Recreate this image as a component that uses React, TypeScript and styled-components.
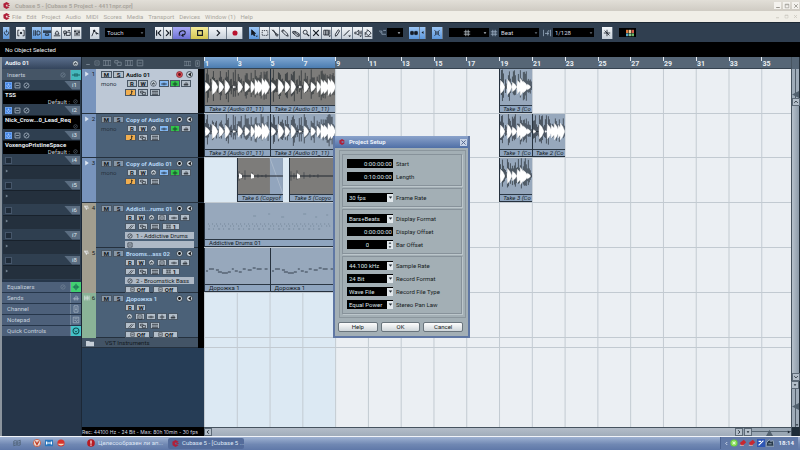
import React from "react";
import styled, { createGlobalStyle, css } from "styled-components";

const Global = createGlobalStyle`
  *, *::before, *::after { box-sizing: border-box; }
  html, body, #root { height: 100%; }
  body { margin: 0; background: #2a3b4e; }
  body, button, input, select {
    font-family: Roboto, "Liberation Sans", Arial, sans-serif;
    font-size: 6px;
    line-height: 8px;
  }
  button, input, select { margin: 0; padding: 0; border: 0; border-radius: 0; color: inherit; }
  svg { display: block; }
`;

/* ---------- glyphs ---------- */

const glyphs: Record<string, React.ReactNode> = {
  power: <><path d="M3.2 3.3a3 3 0 1 0 3.6 0" /><path d="M5 1v4" /></>,
  bracket: <><path d="M3 1.5H1v7h2M7 1.5h2v7H7" /><path d="M5 3.6v2.8M3.6 5h2.8M4 4l2 2M6 4 4 6" /></>,
  inspector: <><path d="M1 1.5v7M3 1.5v7" /><path d="M5 2.5h1.5a2.5 2.5 0 0 1 0 5H5z" /></>,
  info: <><path d="M0 2.5h10M0 4h10" strokeWidth="1.3" /><path d="M3 6h4v2H3z" /></>,
  overview: <path d="M1 8.5h8M2.5 6.5h5L6 3a1.5 1.5 0 0 0-2 0z" />,
  pool: <path d="M1 2.5h3v3H1zM4 4h5v4H4zM2 5.5v3M6 2h3" />,
  mixer: <><path d="M2.5 1v8M5 1v8M7.5 1v8" /><path d="M1.5 3h2M4 6h2M6.5 4h2" strokeWidth="1.6" /></>,
  curve: <><path d="M1 9 4 2l3 3.5L9.5 6" /><circle cx="4" cy="2.3" r="1" fill="currentColor" /><circle cx="7" cy="5.5" r=".8" /></>,
  prev: <path d="M2 1.5v7M7.5 1.5 4 5l3.5 3.5" strokeWidth="1.4" />,
  next: <path d="M8 1.5v7M2.5 1.5 6 5 2.5 8.5" strokeWidth="1.4" />,
  cycle: <path d="M1 7.5h2M1.5 6.5C1.5 1 9 1 9 4.5S6.5 8 5 8M6.7 6 4.8 8l2 1.5" strokeWidth="1.3" />,
  stop: <path d="M2 2h6v6H2z" strokeWidth="1.4" />,
  play: <path d="M3.5 1.5 7 5 3.5 8.5" strokeWidth="1.5" />,
  record: <circle cx="5" cy="5" r="3.2" fill="#b8122f" stroke="none" />,
  arrow: <><path d="M2 1v6.5l1.8-1.5 1.3 2.6 1-.6-1.2-2.5H7z" fill="currentColor" /><path d="M7 8.5h3L8.5 10z" fill="currentColor" stroke="none" /></>,
  range: <path d="M1.5 2h7v6h-7z" strokeDasharray="1.3 1" />,
  split: <path d="M1 1l6 5M3 1 6 7M6 6l3 1-1 2-2-1z" />,
  glue: <path d="M1 2l2-1 5 5 1 3-3-1-5-5zM3 1 2 4" />,
  erase: <path d="M1 3h3l5 3v3H6L1 5zM1 5h3l5 3M4 3v2" />,
  zoom: <><circle cx="4" cy="4" r="2.5" /><path d="M6 6l3 3" strokeWidth="1.5" /></>,
  mute: <path d="M1.5 1.5l7 7M8.5 1.5l-7 7" strokeWidth="1.5" />,
  warp: <><path d="M1 1.5h6v6H1zM3 1.5v6M5 1.5v6M8.5 1v6" /><path d="M6.5 8h3.5L8.3 10z" fill="currentColor" stroke="none" /></>,
  pencil: <path d="M3 9V6.5L6.5 1l1.8 1.3L5 8z" />,
  line: <><path d="M1 8.5 8 1.5" strokeWidth="1.2" /><path d="M6.5 8h3.5L8.3 10z" fill="currentColor" stroke="none" /></>,
  speaker: <><path d="M1 4h2l3-2.5v6L3 6H1zM7.5 3v3M9 2v5" /><path d="M6.5 8h3.5L8.3 10z" fill="currentColor" stroke="none" /></>,
  bucket: <path d="M2 5 5 1.5 9 5 5.5 8.5zM1.5 4v4M4 2V.5M1 9.7h8" />,
  step: <path d="M0 3h4v4.5h6M6 2h4M2 5h1" />,
  snap: <path d="M1 3h3v4H1zM6 3h3v4H6zM0 5h10" fill="currentColor" />,
  left: <path d="M7 2 3 5l4 3z" fill="currentColor" stroke="none" />,
  right: <path d="M2 1l6 4-6 4z" fill="currentColor" stroke="none" />,
  down: <path d="M1.5 3h7L5 7.5z" fill="currentColor" stroke="none" />,
  up: <path d="M1.5 7h7L5 2.5z" fill="currentColor" stroke="none" />,
  chevLeft: <path d="M6.5 2 3.5 5l3 3" strokeWidth="1.5" />,
  chevRight: <path d="M3.5 2l3 3-3 3" strokeWidth="1.5" />,
  chevUp: <path d="M2 6.5l3-3 3 3" strokeWidth="1.5" />,
  chevDown: <path d="M2 3.5l3 3 3-3" strokeWidth="1.5" />,
  cross: <path d="M2 1.5c2 2 2 5 0 7M8 1.5c-2 2-2 5 0 7M5 2.5v5" />,
  hash: <path d="M3.5 1v8M6.5 1v8M1 3.5h8M1 6.5h8" />,
  quant: <path d="M.5 1v8M9.5 1v8M6 8V3.5A1.3 1.3 0 0 1 8 2.5M2.5 5.5h5" />,
  star: <path d="M5 1v8M1 5h8M2 2l6 6" />,
  wave: <path d="M0 5h3M7 5h3M3.500 3v4M5 3v4M6.500 3v4" />,
  eq: <path d="M1 5h2M7 5h2M3.500 3v4M5 1v8M6.500 3v4" />,
  sends: <path d="M1 6h8M3 4v4M5 2v6M7 3v5" />,
  channel: <path d="M2.5 1h5v8h-5zM5 2.5V7M4 5.5h2" />,
  note: <path d="M1.5 1.5h7v7h-7zM3 3.5h4M3 5.5h2M7 5 5 7.5" />,
  ring: <><circle cx="5" cy="5" r="3.7" strokeWidth="1.3" /><path d="M3.5 4.5 5 6.5 6.5 4.5" /></>,
  edit: <><circle cx="5" cy="5" r="4" fill="#d5dde5" stroke="#333f4c" /><path d="M3.5 5h3.2A1.7 1.7 0 1 0 6.5 6.5" stroke="#26303a" /></>,
  dotRing: <><circle cx="5" cy="5" r="4.3" fill="#c6d0da" stroke="#202932" /><circle cx="5" cy="5" r="2" fill="#101010" stroke="none" /></>,
  armed: <><circle cx="5" cy="5" r="4.3" fill="#d94f55" stroke="#7e2430" /><circle cx="5" cy="5" r="2" fill="#65101a" stroke="none" /></>,
  monitor: <><circle cx="5" cy="5" r="4.3" fill="#c6d0da" stroke="#202932" /><path d="M7 2v6L3 5z" fill="#161616" stroke="none" /></>,
  music: <path d="M6 1v6M6 2l2 1M3 7.500h3" strokeWidth="1.3" />,
  lane: <path d="M1 2h4v3H1zM5 4h4v4H4V5" />,
  keys: <path d="M0 2h10v6H0zM3.3 2v6M6.6 2v6" />,
  slash: <path d="M1 8 6 2M4 8l5-6" />,
  square: <path d="M1.5 1.5h7v7h-7zM3 5h4" />,
  circle: <><circle cx="5" cy="5" r="3.6" /><path d="M3.5 6.5l3-3" /></>,
  folder: <path d="M0 2.5h4l1 1h5V9H0z" fill="#c6cfd8" stroke="none" />,
  midi: <path d="M0 2h7M2 2v3h6M4 5v3" stroke="#e8ebee" strokeWidth="1.5" />,
  bars: <path d="M1 1v8M3.5 1v8M6 1v8M8.5 1v8M1 5h7.5" stroke="#e8ebee" />,
  thumb: <path d="M5 1 10 10H0z" fill="#52616f" stroke="none" />,
  thumbLeft: <path d="M0 5 10 0v10z" fill="#52616f" stroke="none" />,
  min: <path d="M2 7.5h6" strokeWidth="1.5" />,
  max: <path d="M2 2h6v6H2zM2 3h6" />,
  close: <path d="M2 2l6 6M8 2 2 8" strokeWidth="1.3" />,
  cubase: <><path d="M5 0 9.5 2.5 7 4.2 5.3 3.4 3.8 5l1.6 1.7L7 6l2.3 1.5L5 10 .8 7.5.5 2.5z" fill="#b0203a" stroke="none" /><path d="M6.5 5h3" stroke="#b0203a" strokeWidth="1.5" /></>,
  firefoxRed: <><circle cx="5" cy="5" r="4.5" fill="#e8e0dc" stroke="#cf5030" /><path d="M3 3l2 4 2-4" stroke="#c23b22" strokeWidth="1.6" /></>,
  mailBlue: <><path d="M0 1h10v8H0z" fill="#2b77bd" stroke="none" /><path d="M2 3v4M8 3v4M3 5h4" stroke="#fff" strokeWidth="1.5" /></>,
  redBall: <><circle cx="5" cy="5" r="4.5" fill="#d8352d" stroke="none" /><path d="M1 6h8a4.5 4 0 0 1-8 0" fill="#f3dfc0" stroke="none" /></>,
  opera: <><circle cx="5" cy="5" r="4.8" fill="#b81b22" stroke="none" /><path d="M5 2v4M5 7v1.3" stroke="#fff" strokeWidth="1.4" /></>,
  flag: <path d="M1 2.5c2-1 3 0 4 0s2 0 4-1v6c-2 1-3 0-4 0s-2 0-4 1zM5 2.5v5M1 5.3c3-1 5 .5 8-.8" stroke="#4c6072" />,
  green: <><circle cx="5" cy="5" r="4.5" fill="#6ed43b" stroke="none" /><path d="M2 5h6M5 2v6M3 3l4 4M7 3 3 7" stroke="#e9ffd8" /></>,
  redTray: <><path d="M1 5l5-4 3 3-5 5z" fill="#c9272f" stroke="none" /><path d="M1 8h5" stroke="#e9b7b7" /></>,
  blueTray: <><path d="M0 0h10v10H0z" fill="#2d55b4" stroke="none" /><path d="M2 8l6-6M2 3h3" stroke="#fff" strokeWidth="1.4" /></>,
  darkTray: <path d="M0 9l1-5 3-3 2 2 3-1 1 7zM3 6h4" fill="#26384a" stroke="#aab9c6" />,
  palette: <><path d="M0 1h3v4H0z" fill="#e07a3a" stroke="none" /><path d="M3.5 1h3v4h-3z" fill="#e8cfa0" stroke="none" /><path d="M7 1h3v4H7z" fill="#d35b48" stroke="none" /><path d="M0 5.5h3v3.5H0z" fill="#55a8c8" stroke="none" /><path d="M3.5 5.5h3V9h-3z" fill="#8fc48b" stroke="none" /><path d="M7 5.5h3V9H7z" fill="#6bb86a" stroke="none" /></>,
};

const Svg = styled.svg<{ $s: number }>`
  width: ${(p) => p.$s}px;
  height: ${(p) => p.$s}px;
  flex: none;
`;
const Glyph = ({ n, s = 8 }: { n: string; s?: number }) => (
  <Svg $s={s} viewBox="0 0 10 10" fill="none" stroke="currentColor" strokeWidth="1" aria-hidden="true">
    {glyphs[n]}
  </Svg>
);

/* ---------- window frame ---------- */

const Window = styled.div`
  min-height: 100vh;
  display: flex;
  flex-direction: column;
  position: relative;
  color: #e8edf2;
  white-space: nowrap;
  overflow: hidden;
`;
const TitleBar = styled.header`
  height: 11px;
  display: flex;
  align-items: center;
  gap: 5px;
  padding: 0 1px 0 3px;
  background: linear-gradient(#e2dfd8, #cfcbc3);
  color: #aaa69e;
  font-weight: bold;
`;
const Spacer = styled.span`flex: 1;`;
const CaptionButton = styled.button<{ $flat?: boolean }>`
  width: 7px;
  height: 7px;
  margin-left: 2px;
  display: grid;
  place-items: center;
  background: ${(p) => (p.$flat ? "transparent" : "#f4f2ee")};
  color: ${(p) => (p.$flat ? "#c4c1b8" : "#8e8b84")};
`;
const CaptionGroup = styled.div`display: flex;`;
const MenuBar = styled.nav`
  height: 11px;
  display: flex;
  align-items: center;
  gap: 5px;
  padding: 0 1px 0 3px;
  background: #f0eee7;
  color: #a9a69e;
`;
const MenuItem = styled.button`background: none;`;
const MenuIcon = styled.span`margin-right: -3px;`;

const Toolbar = styled.div`
  height: 20px;
  flex: none;
  display: flex;
  align-items: center;
  gap: 6px;
  padding: 0 3px;
  background: #303f50;
  border-top: 1px solid #1e2935;
`;
const Group = styled.div<{ $gap?: number; $before?: number }>`
  display: flex;
  align-items: center;
  gap: ${(p) => p.$gap ?? 0}px;
  margin-left: ${(p) => p.$before ?? 0}px;
`;
const tones: Record<string, string> = {
  light: "linear-gradient(#f4f7fa, #c5ced8)",
  blue: "linear-gradient(#9cc6f5, #5c97dc)",
  purple: "linear-gradient(#a9aaf6, #6d71d4)",
  yellow: "linear-gradient(#f5ec9a, #d3c44f)",
};
const ToolButton = styled.button<{ $tone?: string; $w?: number }>`
  width: ${(p) => p.$w ?? 10}px;
  height: 12px;
  display: grid;
  place-items: center;
  background: ${(p) => tones[p.$tone ?? "light"]};
  color: #141b24;
  border-right: 1px solid #6d7a89;
`;
const ToolIcon = styled.span`color: #9fb2c6;`;
const SelectBox = styled.span<{ $w: number }>`
  position: relative;
  width: ${(p) => p.$w}px;
  height: 9px;
  display: flex;
  align-items: center;
  background: #000;
  color: #d5dae0;
  select {
    appearance: none;
    width: 100%;
    height: 9px;
    padding: 0 9px 0 2px;
    background: transparent;
    line-height: 9px;
    outline: none;
  }
  svg {
    position: absolute;
    right: 1px;
    pointer-events: none;
    color: #69747f;
  }
`;
const Drop = ({ w, label, value }: { w: number; label: string; value: string }) => (
  <SelectBox $w={w}>
    <select aria-label={label} defaultValue={value}><option>{value}</option></select>
    <Glyph n="down" s={4} />
  </SelectBox>
);
const HashField = styled.button<{ $w: number }>`
  width: ${(p) => p.$w}px;
  height: 9px;
  display: flex;
  align-items: center;
  justify-content: flex-end;
  gap: 12px;
  padding-right: 2px;
  background: #000;
  color: #b9c1c9;
`;
const InfoLine = styled.div`
  height: 15px;
  display: flex;
  align-items: center;
  padding-left: 5px;
  background: #000;
`;

/* ---------- main panes ---------- */

const Main = styled.main`
  flex: 1;
  display: grid;
  grid-template-columns: 80px 122px minmax(0, 1fr) 9px;
  border-left: 2px solid #8b949d;
`;
const Pane = styled.section`
  display: flex;
  flex-direction: column;
  min-width: 0;
`;
const Inspector = styled(Pane)`
  background: #26364a;
  border-right: 1px solid #1c2836;
`;
const InspectorTitle = styled.div`
  height: 12px;
  display: flex;
  align-items: center;
  justify-content: space-between;
  padding: 0 2px 0 3px;
  background: linear-gradient(#5b6f8d, #34455c);
  font-weight: bold;
`;
const Section = styled.button<{ $first?: boolean }>`
  height: ${(p) => (p.$first ? 11 : 10)}px;
  width: 100%;
  display: flex;
  align-items: center;
  margin-bottom: ${(p) => (p.$first ? 0 : 1)}px;
  padding-left: 5px;
  background: ${(p) => (p.$first ? "#455566" : "#4d607a")};
  color: #c5d0dc;
  text-align: left;
`;
const SectionMark = styled.span`color: #78899a; margin-right: 4px;`;
const SectionLed = styled.span<{ $c: string }>`
  width: 11px;
  height: 10px;
  display: grid;
  place-items: center;
  background: ${(p) => p.$c};
  color: ${(p) => (p.$c === "#556a85" ? "#a3b1c0" : "#0f4a4d")};
  border-left: 1px solid #74879b;
`;
const Slots = styled.div`
  display: grid;
  grid-auto-rows: 25px;
  background: #2f3f50;
  padding: 0 1px;
  margin-bottom: 2px;
`;
const Slot = styled.div`
  display: grid;
  grid-template-rows: 10px 15px;
`;
const SlotBar = styled.div<{ $on: boolean }>`
  display: flex;
  align-items: center;
  gap: 2px;
  padding-left: 2px;
  color: ${(p) => (p.$on ? "#b9c6d3" : "#4c5c6d")};
`;
const SlotPower = styled.button<{ $on: boolean }>`
  width: 7px;
  height: 7px;
  display: grid;
  place-items: center;
  background: ${(p) => (p.$on ? "#3f82e4" : "#1f2b38")};
  border: 1px solid ${(p) => (p.$on ? "#6ca3f0" : "#46566a")};
  color: #fff;
`;
const SlotTag = styled.span`
  width: 16px;
  height: 9px;
  padding-left: 8px;
  background: #5b6d81;
  clip-path: polygon(0 0, 100% 0, 100% 100%, 50% 100%);
  color: #dde5ed;
`;
const SlotBody = styled.div<{ $on: boolean }>`
  height: 14px;
  display: grid;
  grid-template-rows: 7px 7px;
  padding-left: 2px;
  background: ${(p) => (p.$on ? "#000" : "#24303d")};
  border-top: 1px solid #18212b;
  line-height: 7px;
  color: #e6ebf0;
  svg { color: #718090; margin-top: 3px; }
`;
const Preset = styled.span`
  display: flex;
  justify-content: flex-end;
  align-items: center;
  gap: 3px;
  padding-right: 2px;
  color: #c6ced6;
  svg { margin-top: 0; }
`;

/* ---------- track list ---------- */

const TrackPane = styled(Pane)`background: #263d56;`;
const TrackHead = styled.div`
  height: 12px;
  display: flex;
  align-items: center;
  gap: 3px;
  padding: 0 3px;
  background: #3b4957;
  color: #7c8996;
`;
const rowHeight = (i: number) => (i === 1 ? 44 : 45);
const Track = styled.article<{ $h: number; $sel?: boolean }>`
  height: ${(p) => p.$h}px;
  display: grid;
  grid-template-columns: 14px minmax(0, 1fr) 6px;
  background: ${(p) => (p.$sel ? "#bdc8d6" : "#4b6178")};
  border-bottom: 1px solid #25313e;
  color: #151c24;
`;
const kindColors: Record<string, string> = { audio: "#7894bd", midi: "#a29e8f", instrument: "#8ab397" };
const Kind = styled.div<{ $kind: string }>`
  display: flex;
  justify-content: space-between;
  padding: 1px 1px 0 2px;
  background: ${(p) => kindColors[p.$kind]};
  svg { color: #dbe5f2; margin-top: 1px; }
`;
const Meter = styled.div`background: #000;`;
const Controls = styled.div`
  display: grid;
  grid-auto-rows: 7px;
  align-content: start;
  gap: 2px;
  padding: 2px 0 0 5px;
  line-height: 7px;
`;
const Line = styled.div<{ $indent?: boolean; $gap?: number }>`
  display: flex;
  align-items: center;
  gap: ${(p) => p.$gap ?? 1}px;
  padding-left: ${(p) => (p.$indent ? 24 : 0)}px;
  padding-right: 4px;
`;
const chipColors: Record<string, string> = {
  grey: "#b3bec9", blue: "#83b9f5", green: "#31c64b", orange: "#f0ae4f", dark: "#8797a8",
};
const Chip = styled.button<{ $c?: string; $w?: number }>`
  width: ${(p) => p.$w ?? 10}px;
  height: 7px;
  flex: none;
  display: flex;
  align-items: center;
  justify-content: center;
  gap: 2px;
  background: ${(p) => chipColors[p.$c ?? "grey"]};
  border: 1px solid #4a5765;
  font-weight: bold;
  line-height: 6px;
  color: #10161d;
`;
const Round = styled.button`background: none; margin: 0 1px;`;
const TrackName = styled.strong<{ $sel?: boolean }>`
  flex: 1;
  min-width: 0;
  padding-left: 1px;
  color: ${(p) => (p.$sel ? "#131a22" : "#b5d5f2")};
`;
const Mono = styled.span`
  width: 25px;
  color: #28333f;
`;
const Route = styled.button`
  width: 100%;
  height: 7px;
  margin-right: -4px;
  display: flex;
  align-items: center;
  gap: 3px;
  padding-left: 2px;
  background: #aeb9c6;
  line-height: 7px;
  color: #141b23;
`;
const FolderRow = styled.div`
  height: 10px;
  display: grid;
  grid-template-columns: 14px minmax(0, 1fr) 6px;
  align-items: center;
  background: #435466;
  border-bottom: 1px solid #25313e;
  color: #121920;
  span { padding-left: 9px; }
  svg { margin-left: 4px; }
  ${Meter} { height: 10px; }
`;
const Status = styled.footer`
  height: 9px;
  margin-top: auto;
  display: flex;
  align-items: center;
  background: #000;
  color: #d6dbe1;
  font-family: Inter, sans-serif;
  font-size: 5px;
`;

/* ---------- arrangement ---------- */

const COLS = 179;
const Timeline = styled(Pane)`background: #ebeff3;`;
const timelineGrid = css`
  display: grid;
  grid-template-columns: repeat(${COLS}, minmax(0, 1fr));
`;
const Ruler = styled.div`
  ${timelineGrid}
  height: 12px;
  background: #566676;
  border-bottom: 1px solid #35424f;
  font-size: 7px;
  font-weight: bold;
  line-height: 7px;
`;
const RulerRange = styled.div`
  grid-area: 1 / 1 / 2 / 41;
  background: linear-gradient(#7fa7d2, #4b7cb0);
`;
const RulerMark = styled.span<{ $c: number }>`
  grid-row: 1;
  grid-column: ${(p) => p.$c + 1} / span ${(p) => Math.min(10, COLS - p.$c)};
  padding: 4px 0 0 1px;
  background: linear-gradient(#e8eef4, #e8eef4) 0 0 / 1px 4px no-repeat;
`;
const Canvas = styled.div`
  flex: 1;
  background:
    linear-gradient(90deg, #c2cad1 1px, transparent 1px) 0 0 / calc(100% * 10 / ${COLS}) 100%,
    linear-gradient(90deg, #dce9f3 calc(100% * 40 / ${COLS}), #ebeff3 0);
`;
const Lane = styled.div<{ $h: number }>`
  ${timelineGrid}
  height: ${(p) => p.$h}px;
  border-bottom: 1px solid #c2cad1;
`;
const Clip = styled.div<{ $from: number; $to: number; $dark?: boolean }>`
  grid-row: 1;
  grid-column: ${(p) => p.$from + 1} / ${(p) => p.$to + 1};
  min-width: 0;
  display: flex;
  flex-direction: column;
  overflow: hidden;
  background: ${(p) => (p.$dark ? "#7d7c7a" : "#97a8bc")};
  border-left: 1px solid #26313d;
  border-bottom: 1px solid #26313d;
  color: #161d26;
`;
const ClipArt = styled.svg`
  width: 100%;
  flex: 1;
  min-height: 0;
`;
const ClipLabel = styled.div<{ $italic?: boolean; $pad?: number }>`
  height: 7px;
  padding-left: ${(p) => p.$pad ?? 4}px;
  background: #8fa5bf;
  border-top: 1px solid #2b3744;
  font-style: ${(p) => (p.$italic ? "italic" : "normal")};
  line-height: 6px;
`;

const loopBursts: number[][] = [[0, 5, 5], [7, 6, 8], [14, 5, 6], [20, 5, 7], [28, 3, 1], [33, 5, 6], [40, 5, 5], [46, 4, 6], [50, 5, 8], [53, 5, 7], [57, 5, 9], [60, 5, 8]];
const shortBursts: number[][] = [[0, 5, 7], [7, 5, 8], [12, 5, 5], [17, 5, 7], [20, 5, 9], [23, 5, 6], [27, 4, 3]];
const denseBursts: number[][] = [[0, 3, 2], [6, 5, 8], [12, 2, 1], [14, 5, 8], [18, 5, 7], [21, 5, 9], [25, 4, 7], [27, 5, 9]];

const Wave = ({ width, bursts, seed = 1 }: { width: number; bursts: number[][]; seed?: number }) => {
  let r = seed * 7919;
  const rnd = () => ((r = (r * 16807) % 2147483647) / 2147483647);
  let spikes = "";
  for (let x = 0; x < width; x++) {
    const near = bursts.some(([b, w]) => x >= b && x <= b + w * 0.7);
    const tall = near ? 6 + rnd() * 13 : 2 + rnd() * 7;
    spikes += `M${x + 0.5} ${19 - tall}V${19 + tall * (0.4 + rnd() * 0.5)}`;
  }
  const shapes = bursts.map(([x, w, h]) => `M${x} 19L${x + 0.5} ${19 - h}L${x + w * 0.6} ${19 - h * 0.6}L${x + w} 19L${x + w * 0.6} ${19 + h * 0.6}L${x + 0.5} ${19 + h}Z`).join("");
  return (
    <ClipArt viewBox={`0 0 ${width} 38`} preserveAspectRatio="none">
      <path d={spikes} stroke="#23292f" strokeWidth="0.8" opacity="0.85" />
      <path d={`M0 19H${width}`} stroke="#1c232b" strokeWidth="0.8" />
      <path d={shapes} fill="#fff" stroke="#fff" strokeWidth="0.4" />
    </ClipArt>
  );
};

const QuietWave = ({ bumps, fadeFrom }: { bumps: number[]; fadeFrom?: number }) => (
  <ClipArt viewBox="0 0 45 38" preserveAspectRatio="none">
    {fadeFrom && <path d={`M${fadeFrom} 0H45V38H${fadeFrom}z`} fill="#92a5bd" />}
    {fadeFrom && <path d={`M${fadeFrom} 0L45 38`} stroke="#c1ccd8" strokeWidth="0.5" />}
    <path d="M0 19H45" stroke="#20272f" strokeWidth="1.2" />
    <path d="M1 14V24M4 16V22M7 13V23M14 15V22M20 17V21M24 18V20M28 17V21" stroke="#2b323a" strokeWidth="0.6" />
    {bumps.map((x) => <path key={x} d={`M${x} 16l3 2v3l-3 1z`} fill="#fff" />)}
  </ClipArt>
);

const DrumDots = () => (
  <ClipArt viewBox="0 0 130 36" preserveAspectRatio="none">
    <path d="M3 21H127" stroke="#66788b" strokeDasharray="1 3" strokeWidth="0.7" />
    <path d="M4 23H127" stroke="#66788b" strokeDasharray="1 4 1 2" strokeWidth="0.7" />
    <path d="M3 26H118" stroke="#66788b" strokeDasharray="2 3 1 4" strokeWidth="0.7" />
    <path d="M48 13h3M63 11h2M76 14h3M98 11h3M110 14h2M121 12h2" stroke="#7d8fa2" />
  </ClipArt>
);
const BassNotes = () => (
  <ClipArt viewBox="0 0 65 36" preserveAspectRatio="none">
    <path d="M1 23h2M4 21h5M11 22h3M13 24h4M17 25h6M23 24h3M27 21h2M30 23h3M34 24h3M38 21h3M43 22h4M48 20h3M52 21h5M60 21h3" stroke="#34414f" />
  </ClipArt>
);

/* ---------- scroll areas ---------- */

const HScroll = styled.div`
  height: 9px;
  display: flex;
  align-items: center;
  background: #93a0ad;
  border-top: 1px solid #46535f;
  color: #1d2731;
`;
const ScrollButton = styled.button`
  width: 8px;
  height: 8px;
  display: grid;
  place-items: center;
  background: #b4bfca;
  border: 1px solid #5d6a77;
`;
const HTrack = styled.div`
  flex: 1;
  height: 8px;
  background: linear-gradient(#b4bdc9, #a0acba);
`;
const HZoom = styled.div`
  width: 47px;
  height: 8px;
  display: flex;
  align-items: center;
  justify-content: space-between;
  margin-left: 1px;
  background: linear-gradient(#9aa7b4 3px, #5a6875 3px, #5a6875 4px, #9aa7b4 4px);
`;
const VScroll = styled(Pane)`
  background: #8795a3;
  border-left: 1px solid #46535f;
  border-right: 1px solid #25303a;
  color: #25303a;
  align-items: center;
`;
const VHead = styled.div`width: 100%; height: 12px; background: #566676;`;
const VZoom = styled.div<{ $h: number }>`
  width: 100%;
  height: ${(p) => p.$h}px;
  display: flex;
  flex-direction: column;
  align-items: flex-end;
  justify-content: ${(p) => (p.$h > 30 ? "space-between" : "flex-end")};
  background: linear-gradient(90deg, #9eabb8 3px, #4f5c69 3px, #4f5c69 4px, #9eabb8 4px);
`;
const VTrack = styled.div`
  width: 100%;
  flex: 1;
  background: linear-gradient(90deg, #b5c0cb, #8e9caa);
`;
const Corner = styled.div`width: 100%; height: 9px; background: #1e2c38;`;

/* ---------- dialog ---------- */

const Dialog = styled.form`
  position: absolute;
  left: 333px;
  top: 136px;
  width: 137px;
  border: 2px solid #5f77a4;
  border-top: 0;
  background: #a3afb5;
  color: #161c22;
`;
const DialogTitle = styled.div`
  height: 12px;
  display: flex;
  align-items: center;
  gap: 4px;
  padding: 0 1px 0 4px;
  background: linear-gradient(#8ba3cb, #4f6fa6);
  color: #eaf1fa;
  font-weight: bold;
`;
const CloseButton = styled.button`
  width: 7px;
  height: 7px;
  margin-left: auto;
  background: #c7d3e6;
  color: #4d628b;
`;
const Frame = styled.div`
  margin: 2px 2px 4px 4px;
  padding: 3px 3px 3px 2px;
  display: grid;
  gap: 2px;
  border: 1px solid #8b969d;
`;
const Fieldset = styled.fieldset`
  min-width: 0;
  margin: 0;
  padding: 2px 4px;
  border: 1px solid #87929a;
  box-shadow: 1px 1px 0 #bcc6cb;
`;
const Field = styled.label`
  height: 13px;
  display: flex;
  align-items: center;
  gap: 3px;
`;
const FieldBox = styled.span`
  width: 46px;
  height: 9px;
  display: flex;
  align-items: center;
  background: #000;
  color: #dde3e8;
  input, select {
    appearance: none;
    min-width: 0;
    width: 100%;
    height: 9px;
    flex: 1;
    background: transparent;
    line-height: 9px;
    outline: none;
  }
  input { text-align: right; padding-right: 1px; }
  select { padding-left: 2px; }
`;
const FieldArrow = styled.span`
  width: 6px;
  height: 8px;
  display: grid;
  place-items: center;
  background: #e2e8ec;
  color: #222b33;
`;
const SpinPad = styled.i`width: 17px; flex: none;`;
const Buttons = styled.div`
  display: grid;
  grid-template-columns: repeat(3, 1fr);
  gap: 3px;
  padding: 0 5px 4px 3px;
`;
const PushButton = styled.button`
  height: 10px;
  background: linear-gradient(#fdfdfd, #cfd6da);
  border: 1px solid #6a757d;
  border-radius: 2px;
`;

/* ---------- taskbar ---------- */

const Taskbar = styled.footer`
  height: 14px;
  display: flex;
  align-items: center;
  gap: 5px;
  padding-right: 2px;
  background: linear-gradient(#f0f3f8 1px, #9fb2d2 1px, #7088b3 60%, #5f78a8);
`;
const Launch = styled.div`
  width: 82px;
  display: flex;
  gap: 4px;
  padding-left: 13px;
  svg:first-child { margin-right: 8px; }
`;
const Task = styled.button<{ $on?: boolean }>`
  width: 76px;
  height: 11px;
  display: flex;
  align-items: center;
  gap: 3px;
  padding-left: ${(p) => (p.$on ? 4 : 0)}px;
  background: ${(p) => (p.$on ? "#546c9b" : "transparent")};
  border-radius: 2px;
  color: #dde6f5;
`;
const Tray = styled.div`
  height: 12px;
  display: flex;
  align-items: center;
  gap: 1px;
  padding: 0 4px 0 3px;
  background: #6179a7;
  border-left: 1px solid #4b6290;
  color: #eef3fb;
  time { margin-left: 4px; font-weight: bold; }
`;

/* ---------- data ---------- */

const menus = ["File", "Edit", "Project", "Audio", "MIDI", "Scores", "Media", "Transport", "Devices", "Window (1)", "Help"];
const slots = [["TSS", "Default :"], ["Nick_Crow...0_Lead_Req", ""], ["VoxengoPristineSpace", "Default :"], null, null, null, null, null];
const sections: [string, string, string][] = [
  ["Equalizers", "eq", "#42d072"], ["Sends", "sends", "#556a85"], ["Channel", "channel", "#556a85"],
  ["Notepad", "note", "#556a85"], ["Quick Controls", "ring", "#45c3c9"],
];
const tools = ["arrow", "range", "split", "glue", "erase", "zoom", "mute", "warp", "pencil", "line", "speaker", "bucket"];
type TrackInfo = { name: string; kind: "audio" | "midi" | "instrument"; sel?: boolean; out?: string };
const tracks: TrackInfo[] = [
  { name: "Audio 01", kind: "audio", sel: true },
  { name: "Copy of Audio 01", kind: "audio" },
  { name: "Copy of Audio 01", kind: "audio" },
  { name: "Addicti...rums 01", kind: "midi", out: "1 - Addictive Drums" },
  { name: "Brooms...ass 02", kind: "midi", out: "2 - Broomstick Bass" },
  { name: "Дорожка 1", kind: "instrument" },
];
type FieldInfo = { label: string; value: string; type: "time" | "select" | "spin" };
const fieldGroups: FieldInfo[][] = [
  [{ label: "Start", value: "0:00:00:00", type: "time" }, { label: "Length", value: "0:10:00:00", type: "time" }],
  [{ label: "Frame Rate", value: "30 fps", type: "select" }],
  [{ label: "Display Format", value: "Bars+Beats", type: "select" }, { label: "Display Offset", value: "0:00:00:00", type: "time" }, { label: "Bar Offset", value: "0", type: "spin" }],
  [{ label: "Sample Rate", value: "44.100 kHz", type: "select" }, { label: "Record Format", value: "24 Bit", type: "select" }, { label: "Record File Type", value: "Wave File", type: "select" }, { label: "Stereo Pan Law", value: "Equal Power", type: "select" }],
];

const IconChip = ({ n, c, w, label }: { n: string; c?: string; w?: number; label: string }) => (
  <Chip $c={c} $w={w} aria-label={label}><Glyph n={n} s={6} /></Chip>
);
const ReadWrite = () => <><Chip>R</Chip><Chip>W</Chip></>;
const EditButton = () => <Round aria-label="Edit channel"><Glyph n="edit" s={7} /></Round>;
const Lanes = () => <><IconChip n="lane" label="Lanes" /><IconChip n="keys" label="Freeze" /></>;
const Offs = () => (
  <Line $indent $gap={3}>
    <Chip $w={25}><Glyph n="square" s={5} /> Off</Chip>
    <Chip $w={25}><Glyph n="square" s={5} /> Off</Chip>
  </Line>
);

const TrackRow = ({ t, i }: { t: TrackInfo; i: number }) => (
  <Track $h={rowHeight(i)} $sel={t.sel}>
    <Kind $kind={t.kind}>
      <Glyph n={t.kind === "audio" ? "right" : t.kind === "midi" ? "midi" : "bars"} s={6} />
      {i + 1}
    </Kind>
    <Controls>
      <Line>
        <Chip $w={11} $c={t.sel ? "grey" : "dark"}>M</Chip><Chip $w={11} $c={t.sel ? "grey" : "dark"}>S</Chip>
        <TrackName $sel={t.sel}>{t.name}</TrackName>
        <Round aria-label="Record enable"><Glyph n={t.sel ? "armed" : "dotRing"} s={7} /></Round>
        <Round aria-label="Monitor"><Glyph n="monitor" s={7} /></Round>
      </Line>
      {t.kind === "audio" && (
        <>
          <Line>
            <Mono>mono</Mono><ReadWrite /><EditButton />
            <IconChip n="wave" c="blue" label="Inserts" /><IconChip n="eq" c="green" label="Equalizer" /><IconChip n="sends" label="Sends" />
          </Line>
          <Line $indent $gap={2}><IconChip n="music" c="orange" w={11} label="Musical" /><Lanes /></Line>
        </>
      )}
      {t.kind === "midi" && (
        <>
          <Line $indent><ReadWrite /><EditButton /><IconChip n="square" label="Input" /><IconChip n="wave" w={11} label="Inserts" /><IconChip n="sends" label="Sends" /></Line>
          <Line $indent $gap={2}><IconChip n="slash" w={11} label="Drum map" /><Lanes /><Chip $w={18}><Glyph n="keys" s={5} /> 1</Chip></Line>
          <Line $indent><Route><Glyph n="circle" s={6} />{t.out}</Route></Line>
          {i === 3 ? <Line $indent><Route aria-label="Program"><Glyph n="square" s={6} /></Route></Line> : <Offs />}
        </>
      )}
      {t.kind === "instrument" && (
        <>
          <Line $indent><ReadWrite /></Line>
          <Line $indent><EditButton /><IconChip n="square" label="Input" /><IconChip n="wave" label="Inserts" /><IconChip n="eq" label="Equalizer" /><IconChip n="sends" label="Sends" /></Line>
          <Line $indent $gap={2}><IconChip n="slash" w={11} label="Drum map" /><Lanes /></Line>
          <Offs />
        </>
      )}
    </Controls>
    <Meter />
  </Track>
);

const AudioClip = ({ from, to, dark, label, children }: { from: number; to: number; dark?: boolean; label: string; children: React.ReactNode }) => (
  <Clip $from={from} $to={to} $dark={dark}>{children}<ClipLabel $italic $pad={to - from > 10 ? 4 : 3}>{label}</ClipLabel></Clip>
);

const FieldRow = ({ f }: { f: FieldInfo }) => (
  <Field>
    <FieldBox>
      {f.type === "select"
        ? <select defaultValue={f.value}><option>{f.value}</option></select>
        : <input defaultValue={f.value} />}
      {f.type === "select" && <FieldArrow><Glyph n="down" s={5} /></FieldArrow>}
      {f.type === "spin" && <><SpinPad /><FieldArrow><Glyph n="up" s={4} /><Glyph n="down" s={4} /></FieldArrow></>}
    </FieldBox>
    {f.label}
  </Field>
);

export default function App() {
  return (
    <Window>
      <Global />
      <TitleBar>
        <Glyph n="cubase" s={7} />
        <span>Cubase 5 - [Cubase 5 Project - 4411npr.cpr]</span>
        <Spacer />
        <CaptionGroup>
          <CaptionButton aria-label="Minimize"><Glyph n="min" s={6} /></CaptionButton>
          <CaptionButton aria-label="Maximize"><Glyph n="max" s={6} /></CaptionButton>
          <CaptionButton aria-label="Close"><Glyph n="close" s={6} /></CaptionButton>
        </CaptionGroup>
      </TitleBar>
      <MenuBar>
        <MenuIcon><Glyph n="cubase" s={7} /></MenuIcon>
        {menus.map((m) => <MenuItem key={m}>{m}</MenuItem>)}
        <Spacer />
        <CaptionGroup>
          <CaptionButton $flat aria-label="Minimize project"><Glyph n="min" s={5} /></CaptionButton>
          <CaptionButton $flat aria-label="Restore project"><Glyph n="max" s={5} /></CaptionButton>
          <CaptionButton $flat aria-label="Close project"><Glyph n="close" s={5} /></CaptionButton>
        </CaptionGroup>
      </MenuBar>

      <Toolbar>
        <ToolButton $tone="blue" $w={7} aria-label="Activate"><Glyph n="power" s={7} /></ToolButton>
        <ToolButton aria-label="Delay compensation"><Glyph n="bracket" /></ToolButton>
        <Group>
          {["inspector", "info", "overview", "pool", "mixer"].map((n, i) => (
            <ToolButton key={n} $tone={i < 2 ? "blue" : "light"} aria-label={n}><Glyph n={n} /></ToolButton>
          ))}
        </Group>
        <Group $gap={5} $before={2}>
          <ToolButton aria-label="Automation"><Glyph n="curve" /></ToolButton>
          <Drop w={40} label="Automation mode" value="Touch" />
        </Group>
        <Group $before={4}>
          <ToolButton $w={9} aria-label="Previous marker"><Glyph n="prev" /></ToolButton>
          <ToolButton $w={9} aria-label="Next marker"><Glyph n="next" /></ToolButton>
          <ToolButton $w={18} $tone="purple" aria-label="Cycle"><Glyph n="cycle" /></ToolButton>
          <ToolButton $w={18} $tone="yellow" aria-label="Stop"><Glyph n="stop" /></ToolButton>
          <ToolButton $w={18} aria-label="Play"><Glyph n="play" /></ToolButton>
          <ToolButton $w={16} aria-label="Record"><Glyph n="record" /></ToolButton>
        </Group>
        <Group>
          {tools.map((n, i) => (
            <ToolButton key={n} $w={i % 3 ? 10 : 11} $tone={i === 0 ? "blue" : "light"} aria-label={n}><Glyph n={n} /></ToolButton>
          ))}
        </Group>
        <Group $gap={1}>
          <ToolIcon><Glyph n="step" s={7} /></ToolIcon>
          <HashField $w={16} aria-label="Nudge"><Glyph n="down" s={4} /></HashField>
        </Group>
        <Group>
          <ToolButton $tone="blue" $w={11} aria-label="Autoscroll"><Glyph n="snap" /></ToolButton>
          <ToolButton $tone="blue" $w={6} aria-label="Suspend autoscroll"><Glyph n="left" s={5} /></ToolButton>
        </Group>
        <ToolButton $tone="blue" $w={11} aria-label="Snap"><Glyph n="cross" /></ToolButton>
        <Group $gap={1}>
          <HashField $w={40} aria-label="Snap type"><Glyph n="hash" /><Glyph n="down" s={4} /></HashField>
          <ToolIcon><Glyph n="hash" /></ToolIcon>
          <Drop w={40} label="Grid type" value="Beat" />
        </Group>
        <Group $gap={2} $before={-2}>
          <ToolIcon><Glyph n="quant" /></ToolIcon>
          <Drop w={41} label="Quantize" value="1/128" />
        </Group>
        <Group $before={2}><ToolButton $w={11} aria-label="Zero crossings"><Glyph n="star" /></ToolButton></Group>
        <HashField $w={17} aria-label="Colors"><Glyph n="palette" /></HashField>
      </Toolbar>
      <InfoLine>No Object Selected</InfoLine>

      <Main>
        <Inspector>
          <InspectorTitle>Audio 01<Glyph n="edit" s={7} /></InspectorTitle>
          <Section $first>Inserts<Spacer /><SectionMark><Glyph n="circle" s={6} /></SectionMark><SectionLed $c="#45b9bd"><Glyph n="wave" /></SectionLed></Section>
          <Slots>
            {slots.map((s, i) => (
              <Slot key={i}>
                <SlotBar $on={!!s}>
                  <SlotPower $on={!!s} aria-label={`Insert ${i + 1}`}>{s && <Glyph n="power" s={5} />}</SlotPower>
                  {s && <><Glyph n="square" s={7} /><Glyph n="circle" s={7} /></>}
                  <Spacer />
                  <SlotTag>i{i + 1}</SlotTag>
                </SlotBar>
                <SlotBody $on={!!s}>
                  {s ? <><strong>{s[0]}</strong><Preset>{s[1]}<Glyph n="circle" s={5} /></Preset></> : <Glyph n="right" s={4} />}
                </SlotBody>
              </Slot>
            ))}
          </Slots>
          {sections.map(([name, icon, c]) => (
            <Section key={name}>{name}<Spacer />
              {name === "Equalizers" && <SectionMark><Glyph n="circle" s={6} /></SectionMark>}
              <SectionLed $c={c}><Glyph n={icon} /></SectionLed>
            </Section>
          ))}
        </Inspector>

        <TrackPane>
          <TrackHead>
            <Glyph n="min" s={6} /><Glyph n="square" s={6} /><Glyph n="keys" /><Glyph n="lane" /><Glyph n="keys" /><Glyph n="square" />
            <Spacer /><Glyph n="keys" s={7} /><Glyph n="channel" s={7} />
          </TrackHead>
          {tracks.map((t, i) => <TrackRow key={i} t={t} i={i} />)}
          <FolderRow><Glyph n="folder" /><span>VST Instruments</span><Meter /></FolderRow>
          <Status>Rec: 44100 Hz - 24 Bit - Max: 80h 10min - 30 fps</Status>
        </TrackPane>

        <Timeline>
          <Ruler>
            <RulerRange />
            {Array.from({ length: 18 }, (_, k) => <RulerMark key={k} $c={k * 10}>{k * 2 + 1}</RulerMark>)}
          </Ruler>
          <Canvas>
            <Lane $h={45}>
              <AudioClip from={0} to={20} dark label="Take 2 (Audio 01_11)"><Wave width={65} bursts={loopBursts} /></AudioClip>
              <AudioClip from={20} to={40} dark label="Take 2 (Audio 01_11)"><Wave width={65} bursts={loopBursts} seed={2} /></AudioClip>
              <AudioClip from={90} to={100} label="Take 3 (Co"><Wave width={32} bursts={shortBursts} seed={3} /></AudioClip>
            </Lane>
            <Lane $h={44}>
              <AudioClip from={0} to={20} label="Take 3 (Audio 01_11)"><Wave width={65} bursts={loopBursts} seed={4} /></AudioClip>
              <AudioClip from={20} to={40} label="Take 3 (Audio 01_11)"><Wave width={65} bursts={loopBursts} seed={5} /></AudioClip>
              <AudioClip from={90} to={100} label="Take 1 (Co"><Wave width={32} bursts={shortBursts} seed={6} /></AudioClip>
              <AudioClip from={100} to={110} label="Take 2 (Co"><Wave width={32} bursts={denseBursts} seed={7} /></AudioClip>
            </Lane>
            <Lane $h={45}>
              <AudioClip from={10} to={24} dark label="Take 6 (Copyof"><QuietWave bumps={[1, 13]} fadeFrom={32} /></AudioClip>
              <AudioClip from={26} to={40} dark label="Take 5 (Copyo"><QuietWave bumps={[7]} /></AudioClip>
              <AudioClip from={90} to={100} label="Take 3 (Co"><Wave width={32} bursts={shortBursts} seed={8} /></AudioClip>
            </Lane>
            <Lane $h={45}>
              <Clip $from={0} $to={40}><DrumDots /><ClipLabel>Addictive Drums 01</ClipLabel></Clip>
            </Lane>
            <Lane $h={45}>
              <Clip $from={0} $to={20}><BassNotes /><ClipLabel>Дорожка 1</ClipLabel></Clip>
              <Clip $from={20} $to={40}><BassNotes /><ClipLabel>Дорожка 1</ClipLabel></Clip>
            </Lane>
            <Lane $h={45} />
            <Lane $h={10} />
          </Canvas>
          <HScroll>
            <ScrollButton aria-label="Scroll left"><Glyph n="chevLeft" s={6} /></ScrollButton>
            <HTrack />
            <ScrollButton aria-label="Scroll right"><Glyph n="chevRight" s={6} /></ScrollButton>
            <HZoom><ScrollButton aria-label="Zoom presets"><Glyph n="down" s={4} /></ScrollButton><Glyph n="thumb" s={7} /><Glyph n="right" s={4} /></HZoom>
          </HScroll>
        </Timeline>

        <VScroll>
          <VHead />
          <VZoom $h={29}><Glyph n="thumbLeft" s={7} /></VZoom>
          <ScrollButton aria-label="Scroll up"><Glyph n="chevUp" s={6} /></ScrollButton>
          <VTrack />
          <ScrollButton aria-label="Scroll down"><Glyph n="chevDown" s={6} /></ScrollButton>
          <VZoom $h={46}><ScrollButton aria-label="Track zoom presets"><Glyph n="down" s={4} /></ScrollButton><Glyph n="thumbLeft" s={7} /><Glyph n="down" s={4} /></VZoom>
          <Corner />
        </VScroll>
      </Main>

      <Taskbar>
        <Launch><Glyph n="flag" /><Glyph n="firefoxRed" /><Glyph n="mailBlue" /><Glyph n="redBall" /></Launch>
        <Task><Glyph n="opera" />Целесообразен ли ап...</Task>
        <Task $on><Glyph n="cubase" s={7} />Cubase 5 - [Cubase 5 ...</Task>
        <Spacer />
        <Tray>
          <Glyph n="chevLeft" s={5} /><Glyph n="green" /><Glyph n="redTray" /><Glyph n="redTray" /><Glyph n="blueTray" /><Glyph n="darkTray" />
          <time>18:14</time>
        </Tray>
      </Taskbar>

      <Dialog aria-label="Project Setup" onSubmit={(e) => e.preventDefault()}>
        <DialogTitle><Glyph n="cubase" s={6} />Project Setup<CloseButton type="button" aria-label="Close"><Glyph n="close" s={7} /></CloseButton></DialogTitle>
        <Frame>
          {fieldGroups.map((g, i) => (
            <Fieldset key={i}>{g.map((f) => <FieldRow key={f.label} f={f} />)}</Fieldset>
          ))}
        </Frame>
        <Buttons>
          <PushButton type="button">Help</PushButton>
          <PushButton>OK</PushButton>
          <PushButton type="button">Cancel</PushButton>
        </Buttons>
      </Dialog>
    </Window>
  );
}
